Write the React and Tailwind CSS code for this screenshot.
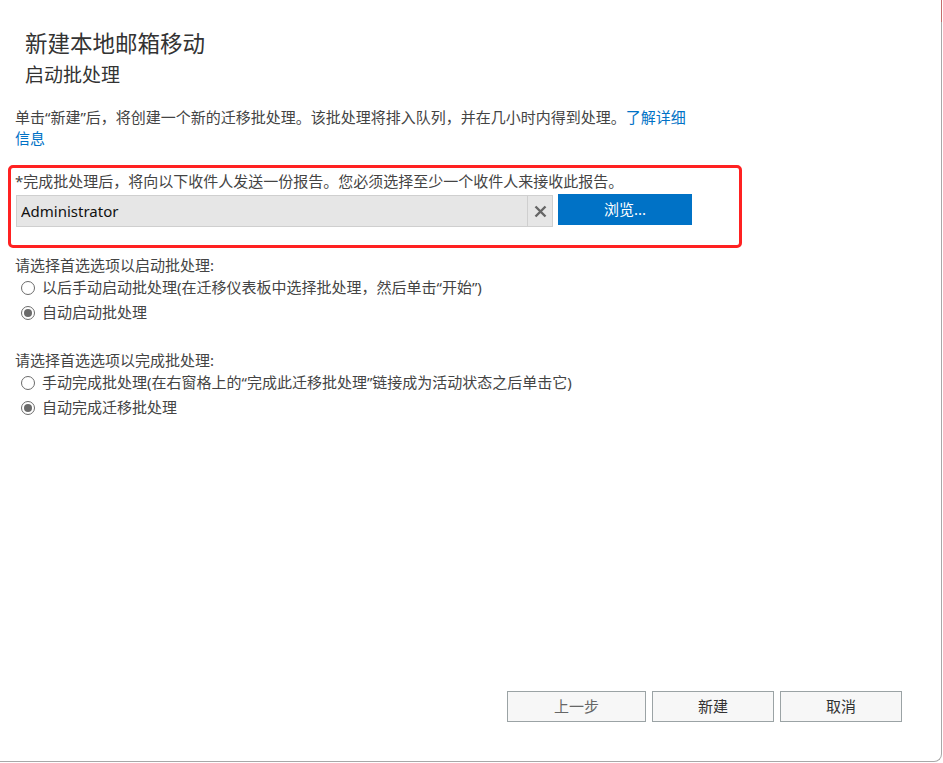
import { useState } from "react";

const FONT = "font-['Noto_Sans','Noto_Sans_CJK_SC',sans-serif]";

function Radio({ checked, label, onSelect }) {
  return (
    <label
      className="flex items-center h-[25px] pl-[6px] cursor-pointer"
      onClick={onSelect}
    >
      <span className="w-[14px] h-[14px] rounded-full border border-[#6b6b6b] bg-white flex items-center justify-center shrink-0">
        {checked && <span className="w-[8px] h-[8px] rounded-full bg-[#6b6b6b]" />}
      </span>
      <span className="ml-[7px] text-[15px] text-[#444] leading-none whitespace-nowrap">
        {label}
      </span>
    </label>
  );
}

function RadioGroup({ title, options, initial }) {
  const [value, setValue] = useState(initial);
  return (
    <div>
      <div className="text-[15px] leading-[20px] text-[#444]">{title}</div>
      <div>
        {options.map((opt, i) => (
          <Radio
            key={opt}
            label={opt}
            checked={value === i}
            onSelect={() => setValue(i)}
          />
        ))}
      </div>
    </div>
  );
}

function FooterButton({ children, muted }) {
  return (
    <button
      className={`h-[31px] border border-[#9ba3a5] bg-[#f7f7f7] text-[15px] ${
        muted ? "w-[139px] text-[#666]" : "w-[122px] text-[#333]"
      }`}
    >
      {children}
    </button>
  );
}

export default function App() {
  const [recipient, setRecipient] = useState("Administrator");

  return (
    <div className={`w-[943px] h-[763px] bg-white relative ${FONT}`}>
      {/* window frame */}
      <div className="w-[942px] h-[762px] border-r border-b border-[#a8a8a8] rounded-br-[8px] flex flex-col">
        <div className="pt-[29px] pl-[25px]">
          <h1 className="text-[22.5px] leading-[30px] text-[#333]">新建本地邮箱移动</h1>
          <h2 className="mt-[3px] text-[19px] leading-[26px] text-[#333]">启动批处理</h2>
        </div>

        <p className="mt-[19px] ml-[15px] w-[680px] text-[15px] leading-[21px] text-[#444]">
          单击“新建”后，将创建一个新的迁移批处理。该批处理将排入队列，并在几小时内得到处理。
          <a href="#" className="text-[#0072c6]">了解详细信息</a>
        </p>

        {/* recipient box */}
        <div className="mt-[16px] ml-[8px] w-[734px] h-[83px] border-[3px] border-[#ff2121] rounded-[5px] pl-[4px] pt-[2px]">
          <div className="text-[15px] leading-[22px] text-[#444]">
            *完成批处理后，将向以下收件人发送一份报告。您必须选择至少一个收件人来接收此报告。
          </div>
          <div className="mt-[3px] ml-[1px] flex items-start">
            <div className="w-[537px] h-[32px] bg-[#e6e6e6] border border-[#cfcfcf] flex">
              <input
                value={recipient}
                onChange={(e) => setRecipient(e.target.value)}
                className="flex-1 bg-transparent outline-none pl-[4px] text-[15px] text-[#111]"
              />
              <button
                onClick={() => setRecipient("")}
                className="w-[25px] border-l border-[#cfcfcf] flex items-center justify-center"
              >
                <svg width="13" height="13" viewBox="0 0 13 13">
                  <path d="M1.5 1.5 L11.5 11.5 M11.5 1.5 L1.5 11.5" stroke="#666" strokeWidth="2.4" />
                </svg>
              </button>
            </div>
            <button className="ml-[5px] -mt-[1px] w-[134px] h-[31px] bg-[#0072c6] text-white text-[15px]">
              浏览...
            </button>
          </div>
        </div>

        <div className="mt-[7px] ml-[15px]">
          <RadioGroup
            title="请选择首选选项以启动批处理:"
            initial={1}
            options={[
              "以后手动启动批处理(在迁移仪表板中选择批处理，然后单击“开始”)",
              "自动启动批处理",
            ]}
          />
        </div>

        <div className="mt-[25px] ml-[15px]">
          <RadioGroup
            title="请选择首选选项以完成批处理:"
            initial={1}
            options={[
              "手动完成批处理(在右窗格上的“完成此迁移批处理”链接成为活动状态之后单击它)",
              "自动完成迁移批处理",
            ]}
          />
        </div>

        <div className="flex-1" />

        <div className="flex justify-end gap-[6px] pr-[39px] pb-[39px]">
          <FooterButton muted>上一步</FooterButton>
          <FooterButton>新建</FooterButton>
          <FooterButton>取消</FooterButton>
        </div>
      </div>

      {/* close button edge showing at the top right */}
      <div className="absolute top-0 right-[1px] w-[1px] h-[22px] bg-[#c46d6d]" />
    </div>
  );
}
